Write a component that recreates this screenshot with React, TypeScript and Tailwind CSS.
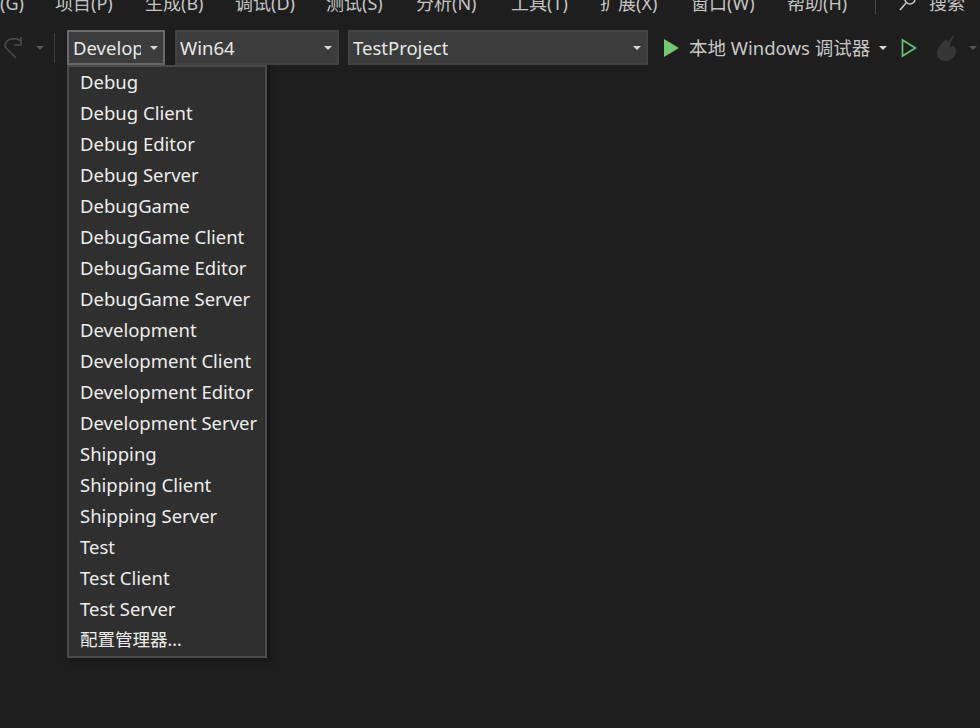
const MENUS = [
  { label: "(G)", width: "w-[24px]" },
  { label: "项目(P)", width: "w-[59px]" },
  { label: "生成(B)", width: "w-[59px]" },
  { label: "调试(D)", width: "w-[60px]" },
  { label: "测试(S)", width: "w-[59px]" },
  { label: "分析(N)", width: "w-[64px]" },
  { label: "工具(T)", width: "w-[58px]" },
  { label: "扩展(X)", width: "w-[60px]" },
  { label: "窗口(W)", width: "w-[65px]" },
  { label: "帮助(H)", width: "w-[62px]" },
];

const CONFIGS = [
  "Debug", "Debug Client", "Debug Editor", "Debug Server",
  "DebugGame", "DebugGame Client", "DebugGame Editor", "DebugGame Server",
  "Development", "Development Client", "Development Editor", "Development Server",
  "Shipping", "Shipping Client", "Shipping Server",
  "Test", "Test Client", "Test Server",
];

const Caret = ({ className = "border-t-[#d8d8d8]" }: { className?: string }) => (
  <span className={`h-0 w-0 border-x-[4px] border-t-[4px] border-x-transparent ${className}`} />
);

function Combo({ label, width, active }: { label: string; width: string; active?: boolean }) {
  return (
    <div className={`flex h-[35px] shrink-0 items-center justify-between border-2 pr-[5px] bg-[#3c3c3c] ${width} ${active ? "border-[#6a6a6a] pl-[4px]" : "border-[#434343] pl-[3px]"}`}>
      <span className={`overflow-hidden whitespace-nowrap pt-[1px] text-[#e8e8e8] ${active ? "w-[68px]" : ""}`}>{label}</span>
      <Caret />
    </div>
  );
}

export default function App() {
  return (
    <div className="relative h-[728px] w-[980px] overflow-hidden bg-[#1e1e1e] text-[18.5px] font-['Noto_Sans','Noto_Sans_CJK_SC',sans-serif]">
      <div className="h-[14px] overflow-hidden">
        <div className="-mt-[10px] flex h-[26px] items-center gap-[31px] whitespace-nowrap text-[18px] text-[#c4c4c4]">
          {MENUS.map((m) => (
            <span key={m.label} className={`shrink-0 ${m.width}`}>{m.label}</span>
          ))}
          <div className="-ml-[5px] mt-[10px] h-[14px] w-[1px] shrink-0 self-start bg-[#4a4a4a]" />
          <div className="ml-[-9px] flex shrink-0 items-center gap-[11px]">
            <svg width="20" height="20" viewBox="0 0 20 20" fill="none" stroke="#c4c4c4" strokeWidth="1.6">
              <circle cx="12" cy="6" r="5" />
              <path d="M8 10 2 17" />
            </svg>
            <span>搜索</span>
          </div>
        </div>
      </div>

      <div className="mt-[16px] flex h-[35px] items-center">
        <svg className="ml-[3px] shrink-0" width="20" height="24" viewBox="0 0 20 24" fill="none" stroke="#4b4b4b" strokeWidth="1.6">
          <path d="M13 22 3 12C1 9 3 4 8 3c4-1 7 0 10 2" />
          <path d="M18 1v8h-7" />
        </svg>
        <span className="ml-[13px] flex shrink-0"><Caret className="border-t-[#555555]" /></span>
        <div className="ml-[10px] mr-[12px] h-[30px] w-[1px] shrink-0 bg-[#3d3d3d]" />
        <Combo label="Development" width="w-[98px]" active />
        <div className="ml-[10px]"><Combo label="Win64" width="w-[164px]" /></div>
        <div className="ml-[9px]"><Combo label="TestProject" width="w-[300px]" /></div>
        <svg className="ml-[15px] shrink-0" width="17" height="20" viewBox="0 0 17 20">
          <path d="M1 1v18l15-9z" fill="#6fc96f" />
        </svg>
        <span className="ml-[9px] whitespace-nowrap pt-[1px] text-[#c8c8c8]">本地 Windows 调试器</span>
        <span className="ml-[9px] flex shrink-0"><Caret /></span>
        <svg className="ml-[14px] shrink-0" width="16" height="20" viewBox="0 0 16 20" fill="none" stroke="#6fc96f" strokeWidth="1.6">
          <path d="M1.5 2v16l13-8z" />
        </svg>
        <svg className="ml-[18px] shrink-0" width="24" height="28" viewBox="0 0 24 28" fill="#363636">
          <path d="M20 1c-5 2-6 5-6 7-2-1-2-2-2-3C8 8 2 13 2 19c0 5 4 8 8 8 6 0 11-4 11-10 0-3-2-5-3-6-1 2-2 2-3 2 0-4 2-8 5-12z" />
        </svg>
        <span className="ml-[10px] flex shrink-0"><Caret className="border-t-[#555555]" /></span>
      </div>

      <div className="absolute left-[67px] top-[65px] w-[200px] border-2 border-[#4a4a4a] bg-[#2f2f2f] text-[#ededed] shadow-[3px_3px_6px_rgba(0,0,0,0.35)]">
        {CONFIGS.map((c) => (
          <div key={c} className="flex h-[31px] items-center whitespace-nowrap pb-[2px] pl-[11px]">{c}</div>
        ))}
        <div className="flex h-[31px] items-center whitespace-nowrap pb-[2px] pl-[11px] text-[17.5px]">配置管理器...</div>
      </div>
    </div>
  );
}
